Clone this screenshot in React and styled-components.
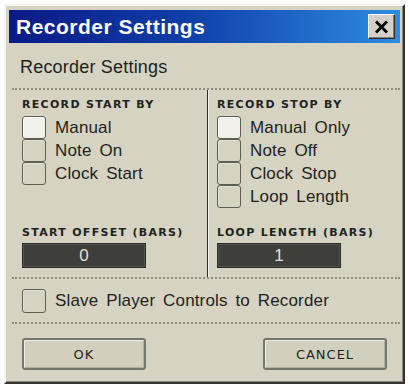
import React, { useState } from 'react';
import styled, { createGlobalStyle } from 'styled-components';

const GlobalStyle = createGlobalStyle`
  body {
    margin: 0;
    background: #ffffff;
    font-family: 'Liberation Sans', Arial, sans-serif;
  }
`;

const startOptions = ['Manual', 'Note On', 'Clock Start'];
const stopOptions = ['Manual Only', 'Note Off', 'Clock Stop', 'Loop Length'];

const App = () => {
  const [start, setStart] = useState(0);
  const [stop, setStop] = useState(0);
  const [slave, setSlave] = useState(false);

  return (
    <>
      <GlobalStyle />
      <Window>
        <TitleBar>
          <TitleText>Recorder Settings</TitleText>
          <CloseButton>
            <svg width="15" height="14" viewBox="0 0 15 14">
              <path d="M2 1.5 L13 12.5 M13 1.5 L2 12.5" stroke="#000" strokeWidth="2.8" />
            </svg>
          </CloseButton>
        </TitleBar>
        <Body>
          <Heading>Recorder Settings</Heading>
          <Columns>
            <Column>
              <SectionLabel>Record Start By</SectionLabel>
              <CheckList>
                {startOptions.map((opt, i) => (
                  <CheckRow key={opt} onClick={() => setStart(i)}>
                    <Box $on={start === i} />
                    <CheckText>{opt}</CheckText>
                  </CheckRow>
                ))}
              </CheckList>
              <ValueBlock>
                <SectionLabel>Start Offset (Bars)</SectionLabel>
                <ValueField>0</ValueField>
              </ValueBlock>
            </Column>
            <Column $divided>
              <SectionLabel>Record Stop By</SectionLabel>
              <CheckList>
                {stopOptions.map((opt, i) => (
                  <CheckRow key={opt} onClick={() => setStop(i)}>
                    <Box $on={stop === i} />
                    <CheckText>{opt}</CheckText>
                  </CheckRow>
                ))}
              </CheckList>
              <ValueBlock>
                <SectionLabel>Loop Length (Bars)</SectionLabel>
                <ValueField>1</ValueField>
              </ValueBlock>
            </Column>
          </Columns>
          <SlaveRow onClick={() => setSlave(!slave)}>
            <Box $on={slave} />
            <CheckText>Slave Player Controls to Recorder</CheckText>
          </SlaveRow>
          <ButtonRow>
            <DialogButton>OK</DialogButton>
            <DialogButton>Cancel</DialogButton>
          </ButtonRow>
        </Body>
      </Window>
    </>
  );
};

export default App;

const Window = styled.div`
  width: 401px;
  height: 380px;
  box-sizing: border-box;
  margin: 4px 0 0 4px;
  background: #d6d3c2;
  border: 2px solid;
  border-color: #f6f5ee #33332f #33332f #f6f5ee;
  box-shadow: inset -1px -1px 0 #8a887c;
  padding: 4px 3px 0 3px;
  display: flex;
  flex-direction: column;
`;

const TitleBar = styled.div`
  height: 33px;
  flex-shrink: 0;
  display: flex;
  align-items: center;
  justify-content: space-between;
  padding: 0 5px 0 7px;
  background: linear-gradient(to right, #0a1a86 0%, #0f3ea8 45%, #2e8ce0 100%);
`;

const TitleText = styled.span`
  color: #ffffff;
  font-family: 'Liberation Sans', Arial, sans-serif;
  font-weight: 700;
  font-size: 21px;
  letter-spacing: 0.5px;
`;

const CloseButton = styled.div`
  width: 27px;
  height: 25px;
  box-sizing: border-box;
  display: flex;
  align-items: center;
  justify-content: center;
  background: #d4d0c8;
  border: 1px solid;
  border-color: #ffffff #2a2a2a #2a2a2a #ffffff;
  box-shadow: inset -1px -1px 0 #808080;
`;

const Body = styled.div`
  flex: 1;
  display: flex;
  flex-direction: column;
  padding-left: 3px;
`;

const Heading = styled.div`
  height: 45px;
  box-sizing: border-box;
  padding: 3px 0 0 8px;
  line-height: 42px;
  font-size: 18px;
  letter-spacing: 0.2px;
  color: #1f1f1c;
`;

const Columns = styled.div`
  height: 189px;
  box-sizing: border-box;
  display: grid;
  grid-template-columns: 195px 1fr;
  border-top: 2px dotted #8f8d82;
`;

const Column = styled.div`
  display: flex;
  flex-direction: column;
  padding: 7px 0 9px ${(p) => (p.$divided ? '9px' : '10px')};
  border-left: ${(p) => (p.$divided ? '1px solid #2e2e2b' : 'none')};
  box-shadow: ${(p) => (p.$divided ? 'inset 1px 0 0 #f2f1ea' : 'none')};
`;

const SectionLabel = styled.div`
  font-family: 'DejaVu Sans', 'Liberation Sans', sans-serif;
  font-weight: 700;
  font-size: 11px;
  line-height: 15px;
  letter-spacing: 1.3px;
  text-transform: uppercase;
  color: #22221f;
`;

const CheckList = styled.div`
  display: flex;
  flex-direction: column;
  margin-top: 4px;
`;

const CheckRow = styled.div`
  display: flex;
  align-items: center;
  gap: 9px;
  height: 23px;
  cursor: pointer;
`;

const Box = styled.div`
  width: 24px;
  height: 23px;
  flex-shrink: 0;
  box-sizing: border-box;
  border: 1px solid #5f5e55;
  border-radius: 3px;
  background: ${(p) => (p.$on ? '#f1f0ea' : '#d6d3c2')};
  box-shadow: inset 1px 1px 0 ${(p) => (p.$on ? '#ffffff' : '#e4e2d4')};
`;

const CheckText = styled.span`
  font-size: 17px;
  letter-spacing: 0.15px;
  word-spacing: 3px;
  color: #1f1f1c;
  white-space: nowrap;
`;

const ValueBlock = styled.div`
  margin-top: auto;
  display: flex;
  flex-direction: column;
  gap: 3px;
`;

const ValueField = styled.div`
  width: 124px;
  height: 25px;
  box-sizing: border-box;
  background: #3e3e3a;
  border: 1px solid #2a2a27;
  box-shadow: inset 0 0 0 1px #55554f;
  color: #e2e2dc;
  font-size: 17px;
  line-height: 23px;
  text-align: center;
`;

const SlaveRow = styled.div`
  height: 45px;
  box-sizing: border-box;
  display: flex;
  align-items: center;
  gap: 9px;
  padding-left: 10px;
  border-top: 2px dotted #8f8d82;
  cursor: pointer;

  & > div {
    height: 24px;
  }
`;

const ButtonRow = styled.div`
  display: flex;
  justify-content: space-between;
  padding: 14px 13px 0 10px;
  border-top: 2px dotted #8f8d82;
`;

const DialogButton = styled.button`
  width: 124px;
  height: 32px;
  box-sizing: border-box;
  background: #d2cfbe;
  border: 2px solid #77766b;
  border-radius: 3px;
  box-shadow: inset 1px 1px 0 #efeee6, inset -1px -1px 0 #b3b1a3;
  font-family: 'DejaVu Sans', 'Liberation Sans', sans-serif;
  font-size: 13px;
  letter-spacing: 1px;
  text-transform: uppercase;
  color: #1f1f1c;
  cursor: pointer;
  padding: 0;
`;
